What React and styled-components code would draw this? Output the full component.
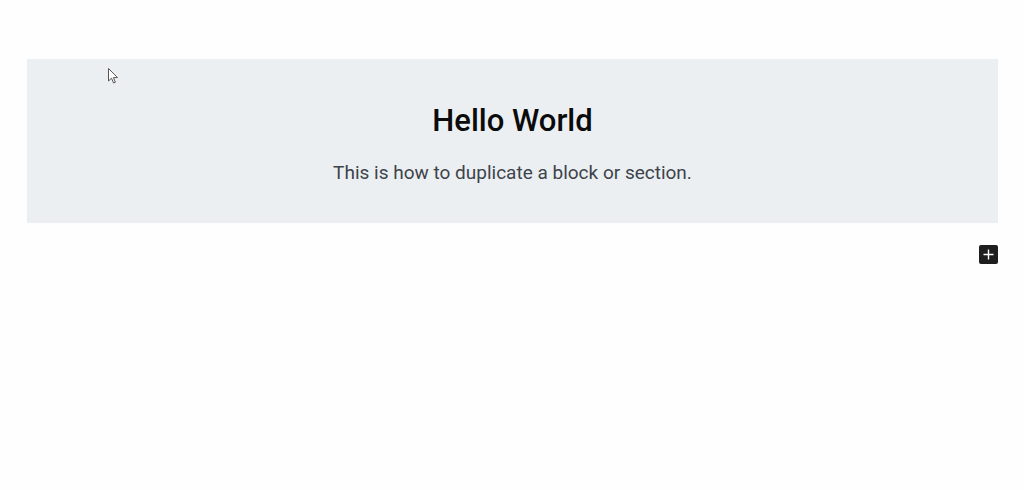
import React from "react";
import styled, { createGlobalStyle } from "styled-components";

const GlobalStyle = createGlobalStyle`
  html, body {
    margin: 0;
    padding: 0;
    background: #fdfefd;
    font-family: Roboto, "Liberation Sans", sans-serif;
  }
`;

const Page = styled.div`
  position: relative;
  width: 1024px;
  height: 490px;
  padding: 59px 26px 0 27px;
  box-sizing: border-box;
  display: flex;
  flex-direction: column;
  align-items: stretch;
`;

const Section = styled.section`
  height: 164px;
  background: #eceff2;
  display: flex;
  flex-direction: column;
  align-items: center;
  padding-top: 42px;
  box-sizing: border-box;
`;

const Heading = styled.h2`
  margin: 0;
  font-size: 31px;
  font-weight: 500;
  color: #0b0b0b;
  line-height: 40px;
`;

const Lead = styled.p`
  margin: 20px 0 0;
  font-size: 19px;
  font-weight: 400;
  color: #3c434a;
  line-height: 24px;
`;

const Toolbar = styled.div`
  display: flex;
  justify-content: flex-end;
  padding-top: 22px;
`;

const AddButton = styled.button`
  width: 19px;
  height: 19px;
  padding: 0;
  border: none;
  border-radius: 2px;
  background: #1e1e1e;
  color: #fff;
  display: flex;
  align-items: center;
  justify-content: center;
  cursor: pointer;
`;

const Pointer = styled.svg`
  position: absolute;
  left: 108px;
  top: 68px;
`;

const App = () => (
  <>
    <GlobalStyle />
    <Page>
      <Section>
        <Heading>Hello World</Heading>
        <Lead>This is how to duplicate a block or section.</Lead>
      </Section>
      <Toolbar>
        <AddButton aria-label="Add block">
          <svg width="11" height="11" viewBox="0 0 11 11">
            <path d="M5.5 0.5v10M0.5 5.5h10" stroke="#fff" strokeWidth="1.4" />
          </svg>
        </AddButton>
      </Toolbar>
      <Pointer width="12" height="17" viewBox="0 0 12 17">
        <path
          d="M0.5 0.5 L0.5 13 L3.5 10.2 L5.6 15 L7.4 14.2 L5.4 9.6 L9.5 9.6 Z"
          fill="#fff"
          stroke="#555"
          strokeWidth="1"
          strokeLinejoin="round"
        />
      </Pointer>
    </Page>
  </>
);

export default App;
